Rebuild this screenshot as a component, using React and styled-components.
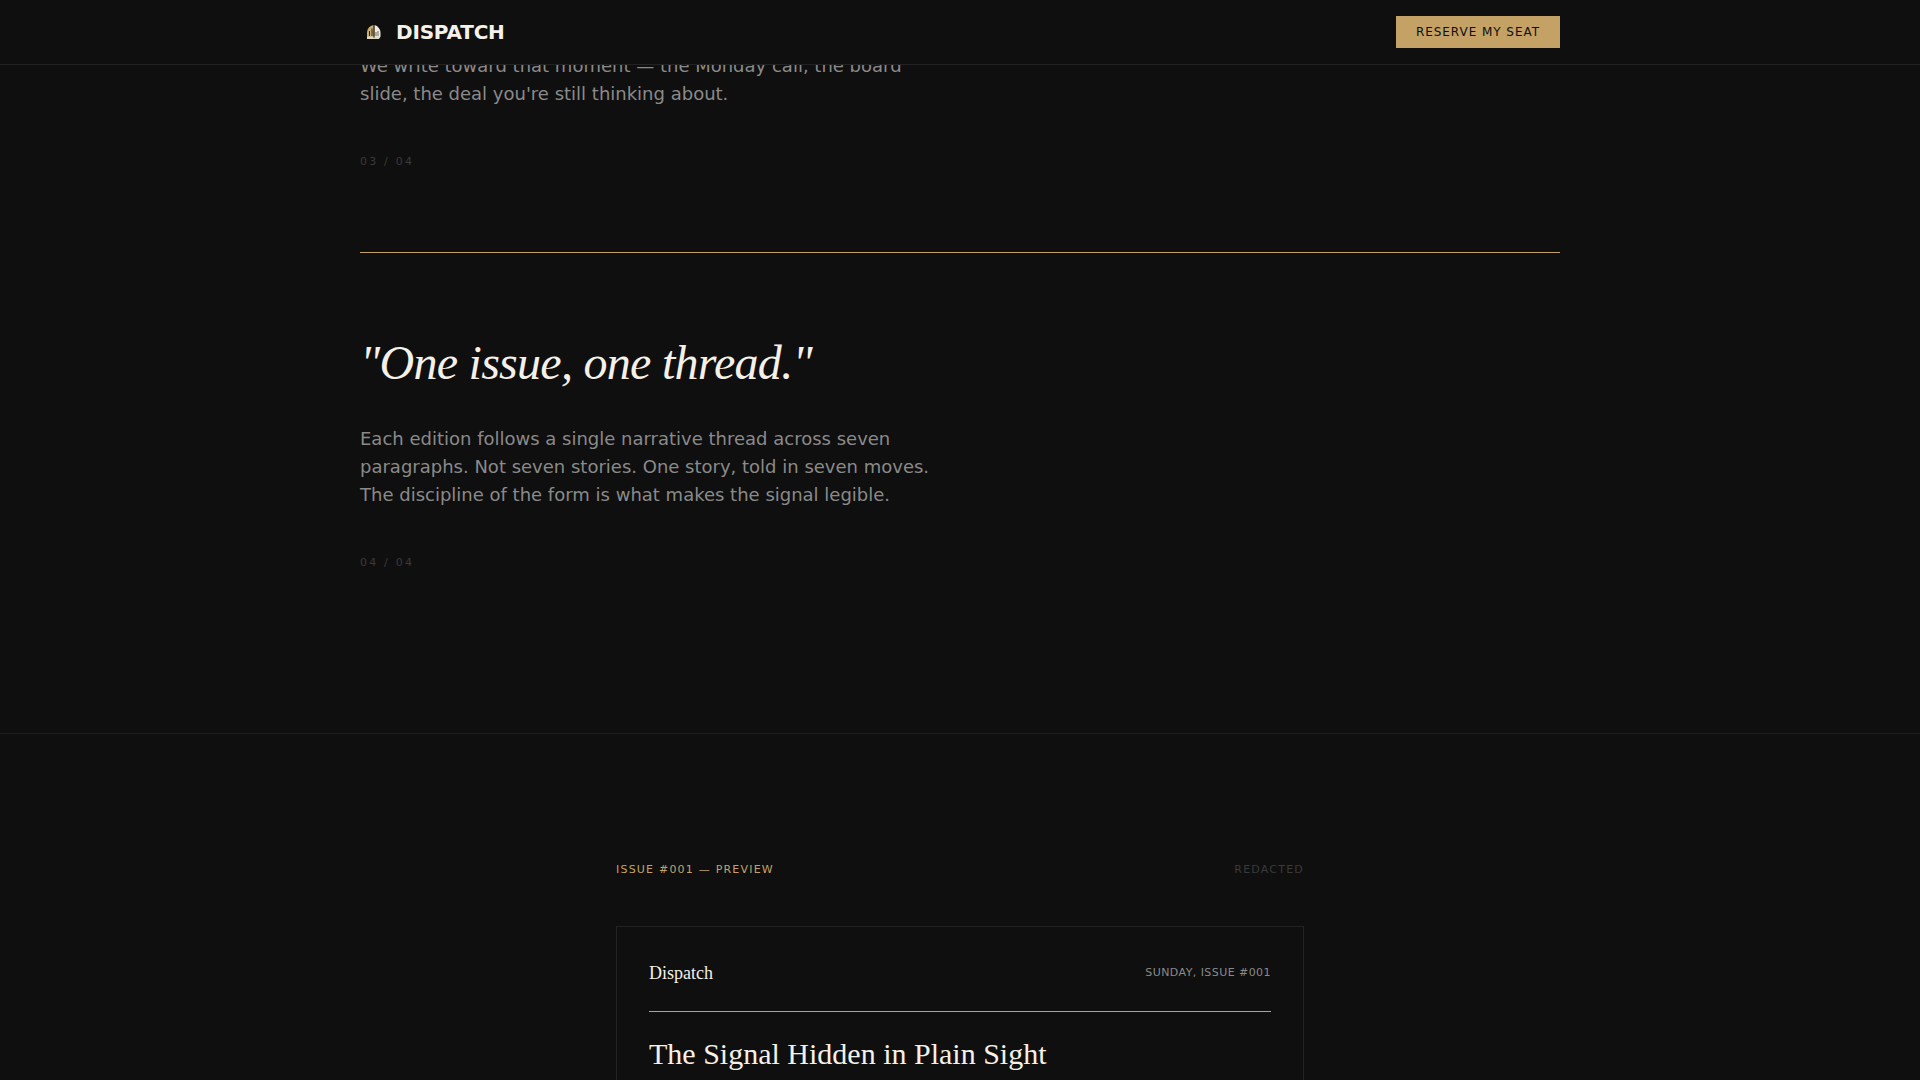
import React from "react";
import styled, { createGlobalStyle } from "styled-components";

const App = () => {
  return (
    <Page>
      <GlobalStyle />
      <Header>
        <Nav>
          <Brand href="#top">
            <Logo />
            Dispatch
          </Brand>
          <Reserve type="button">Reserve my seat</Reserve>
        </Nav>
      </Header>

      <main>
        {/* PRINCIPLES */}
        <Principles>
          <Principle>
            <Copy>
              We write toward that moment — the Monday call, the board slide,
              the deal you're still thinking about.
            </Copy>
            <Counter>03 / 04</Counter>
          </Principle>
          <Principle>
            <Quote>"One issue, one thread."</Quote>
            <Copy>
              Each edition follows a single narrative thread across seven
              paragraphs. Not seven stories. One story, told in seven moves.
              The discipline of the form is what makes the signal legible.
            </Copy>
            <Counter>04 / 04</Counter>
          </Principle>
        </Principles>

        {/* PREVIEW */}
        <Preview>
          <PreviewHead>
            <Label $color="#c4a265">Issue #001 — Preview</Label>
            <Label $color="#3a3a3a">Redacted</Label>
          </PreviewHead>
          <Issue>
            <Masthead>
              <Name>Dispatch</Name>
              <Edition>Sunday, Issue #001</Edition>
            </Masthead>
            <Title>The Signal Hidden in Plain Sight</Title>
          </Issue>
        </Preview>
      </main>
    </Page>
  );
};

const Logo = () => (
  <Mark viewBox="0 0 28 28" aria-hidden="true">
    <path d="M7 21V14C7.500 10.500 9.500 8 13.500 7V20.500H7Z" fill="#c9ad70" />
    <path d="M14.500 7C18 8 20.500 11 20.500 15V18.500L19 20.500H14.500Z" fill="#f0ece2" />
    <path d="M7 18.500H20L19 21H7Z" fill="#ddd8c8" />
    <path d="M9.500 13V18M12 10.500V18" stroke="#2b261b" strokeWidth="1" />
    <path d="M14 7V20" stroke="#5a4b30" strokeWidth="1" />
    <path d="M16 14V18M18 13V18" stroke="#68645c" strokeWidth="1" />
  </Mark>
);

const GlobalStyle = createGlobalStyle`
  * {
    box-sizing: border-box;
    margin: 0;
    padding: 0;
  }

  body {
    background: #0f0f0f;
    color: #f5f0e8;
    font-family: "DejaVu Sans", sans-serif;
  }
`;

const Page = styled.div`
  display: flex;
  flex-direction: column;
  min-height: 100vh;

  main {
    flex: 1;
    display: flex;
    flex-direction: column;
    padding-top: 52px;
  }
`;

const Header = styled.header`
  position: fixed;
  top: 0;
  left: 0;
  right: 0;
  z-index: 10;
  background: #0f0f0f;
  border-bottom: 1px solid #222222;
`;

const Nav = styled.nav`
  display: flex;
  align-items: center;
  justify-content: space-between;
  max-width: 1200px;
  height: 64px;
  margin: 0 auto;
`;

const Brand = styled.a`
  display: flex;
  align-items: center;
  gap: 8px;
  color: #f5f0e8;
  font-size: 20px;
  font-weight: 700;
  letter-spacing: -0.01em;
  text-transform: uppercase;
  text-decoration: none;
`;

const Mark = styled.svg`
  width: 28px;
  height: 28px;
`;

const Reserve = styled.button`
  height: 32px;
  padding: 0 20px;
  border: none;
  background: #c4a265;
  color: #0f0f0f;
  font-family: inherit;
  font-size: 12px;
  letter-spacing: 0.08em;
  text-transform: uppercase;
  cursor: pointer;
`;

const Principles = styled.section`
  width: 100%;
  max-width: 1200px;
  margin: 0 auto;
  padding-bottom: 80px;
`;

const Principle = styled.article`
  padding-bottom: 80px;

  & + & {
    padding-top: 80px;
    border-top: 1px solid #c4a265;
  }
`;

const Quote = styled.h2`
  margin-bottom: 32px;
  font-family: "Liberation Serif", serif;
  font-size: 48px;
  font-style: italic;
  font-weight: 400;
  line-height: 60px;
  letter-spacing: -0.015em;
`;

const Copy = styled.p`
  max-width: 576px;
  color: #8a8a8a;
  font-size: 18px;
  line-height: 28px;
`;

const Counter = styled.p`
  margin-top: 44px;
  color: #3a3a3a;
  font-size: 11px;
  line-height: 20px;
  letter-spacing: 0.2em;
`;

const Preview = styled.section`
  flex: 1;
  display: flex;
  flex-direction: column;
  align-items: center;
  padding-top: 128px;
  border-top: 1px solid #1e1e1e;
`;

const PreviewHead = styled.div`
  display: flex;
  justify-content: space-between;
  width: 100%;
  max-width: 688px;
  margin-bottom: 48px;
`;

const Label = styled.span`
  color: ${({ $color }) => $color};
  font-size: 11px;
  line-height: 16px;
  letter-spacing: 0.11em;
  text-transform: uppercase;
`;

const Issue = styled.article`
  flex: 1;
  width: 100%;
  max-width: 688px;
  padding: 32px 32px 0;
  border: 1px solid #222222;
  border-bottom: none;
`;

const Masthead = styled.div`
  display: flex;
  align-items: center;
  justify-content: space-between;
  padding-bottom: 24px;
  margin-bottom: 24px;
  border-bottom: 1px solid #c4a265;
`;

const Name = styled.span`
  font-family: "Liberation Serif", serif;
  font-size: 18px;
  line-height: 28px;
`;

const Edition = styled.span`
  color: #8a8a8a;
  font-size: 11px;
  line-height: 16px;
  letter-spacing: 0.04em;
  text-transform: uppercase;
`;

const Title = styled.h3`
  font-family: "Liberation Serif", serif;
  font-size: 30px;
  font-weight: 400;
  line-height: 36px;
`;

export default App;
